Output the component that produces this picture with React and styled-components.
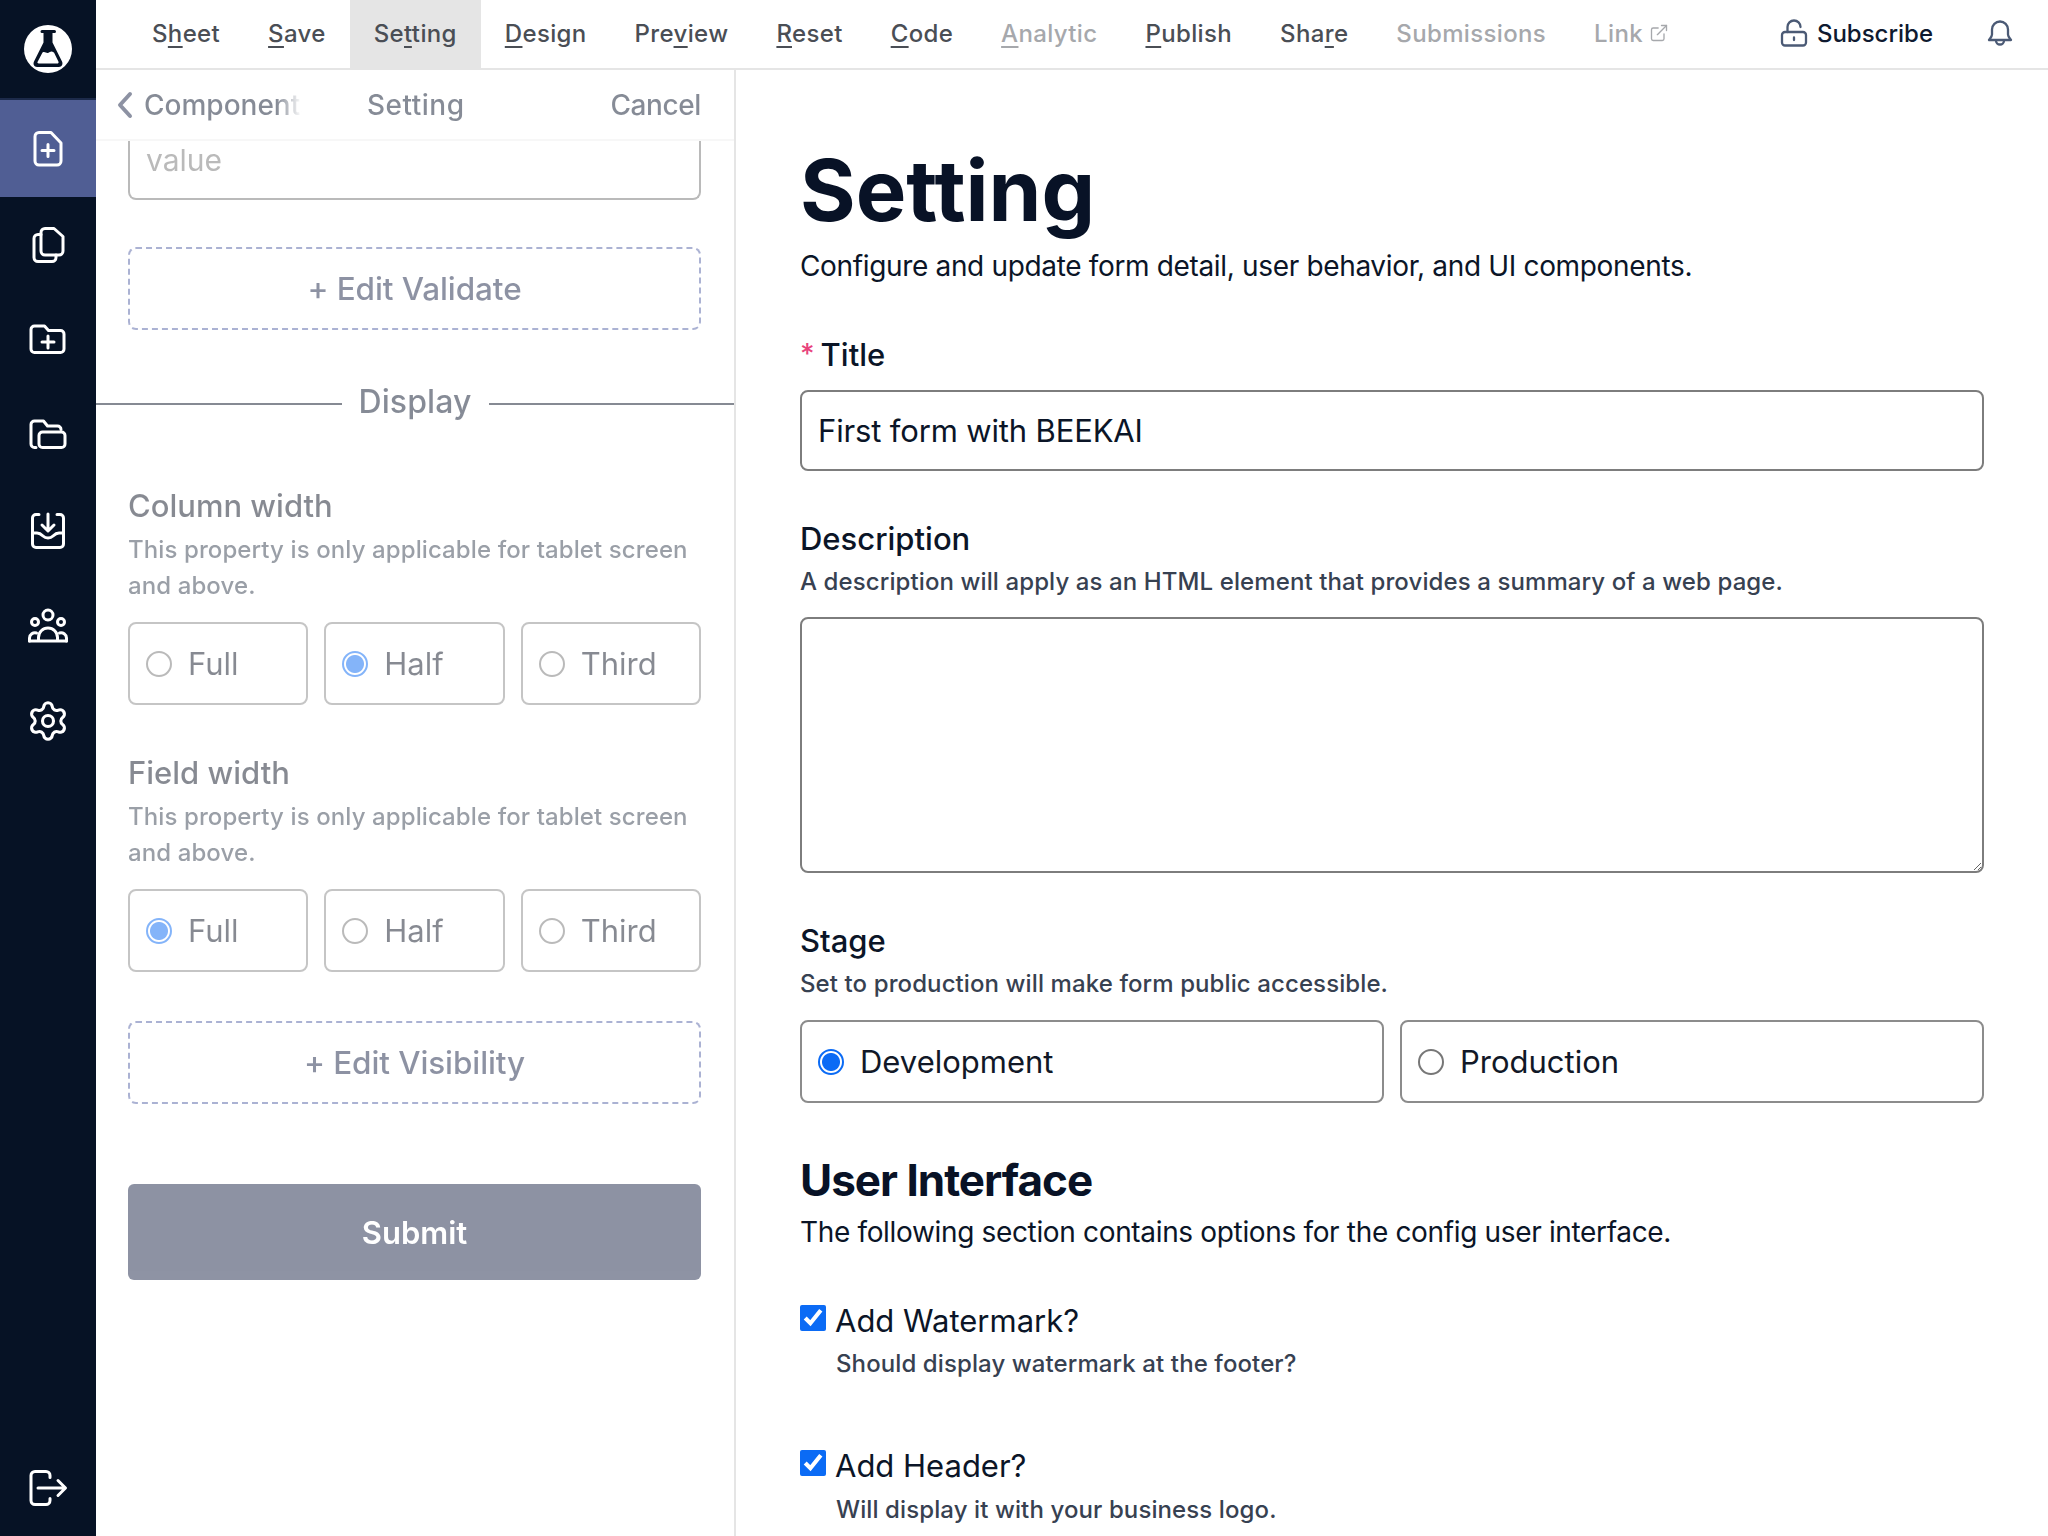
import styled, { createGlobalStyle } from "styled-components";
import { Settings, ExternalLink } from "lucide-react";

const GlobalStyle = createGlobalStyle`
    html, body {
        margin:0;
        padding:0;
        height:100%;
        overflow:hidden;
        background:#fff;
    }
    * {
        box-sizing:border-box;
    }
    body {
        font-family:Inter, "Liberation Sans", sans-serif;
        color:#0b1527;
    }
`

const Page = styled.div`
    display:flex;
    width:2048px;
    height:1536px;
    overflow:hidden;
`

const Sidebar = styled.aside`
    width:96px;
    flex:none;
    background:#061225;
    display:flex;
    flex-direction:column;
`

const LogoBox = styled.div`
    height:100px;
    display:flex;
    align-items:center;
    justify-content:center;
    border-bottom:2px solid #1c2a4a;
`

const SideItem = styled.div`
    height:${p => p.$tall ? 97 : 95.3}px;
    display:flex;
    align-items:center;
    justify-content:center;
    background:${p => p.$active ? "#505e94" : "transparent"};
    color:#fff;
`

const SideBottom = styled(SideItem)`
    margin-top:auto;
`

const Main = styled.div`
    flex:1;
    min-width:0;
    display:flex;
    flex-direction:column;
`

const TopBar = styled.nav`
    height:70px;
    flex:none;
    display:flex;
    align-items:stretch;
    padding-left:32px;
    border-bottom:2px solid #e5e5e5;
    font-size:24px;
    font-weight:500;
`

const NavItem = styled.div`
    display:flex;
    align-items:center;
    gap:6px;
    padding:0 24px 2px;
    letter-spacing:0.35px;
    color:${p => p.$off ? "#a6a8ac" : "#4a4e55"};
    background:${p => p.$active ? "#e5e5e5" : "transparent"};
    u {
        text-decoration-thickness:2px;
        text-underline-offset:4px;
    }
`

const TopRight = styled.div`
    margin-left:auto;
    display:flex;
    align-items:center;
    padding:0 34px 2px 0;
    color:#4b5a75;
`

const Subscribe = styled.div`
    display:flex;
    align-items:center;
    gap:9px;
    margin-right:53px;
    span {
        color:#0f1a30;
    }
`

const Body = styled.div`
    flex:1;
    min-height:0;
    display:flex;
`

const LeftPanel = styled.section`
    width:640px;
    flex:none;
    border-right:2px solid #e5e5e5;
    display:flex;
    flex-direction:column;
`

const LeftInner = styled.div`
    opacity:0.5;
    flex:1;
    display:flex;
    flex-direction:column;
`

const PanelHead = styled.div`
    height:69px;
    flex:none;
    display:grid;
    grid-template-columns:251px 1fr auto;
    align-items:center;
    padding:0 33px 0 20px;
    font-size:28px;
    font-weight:500;
    color:#0f1a30;
`

const PanelRule = styled.div`
    height:2px;
    flex:none;
    background:#f0f0f0;
`

const BackLink = styled.div`
    display:flex;
    align-items:center;
    gap:10px;
    color:#1d2749;
`

const BackText = styled.span`
    width:158px;
    overflow:hidden;
    white-space:nowrap;
    color:#0f1a30;
    -webkit-mask-image:linear-gradient(to right, #000 84%, transparent 100%);
    mask-image:linear-gradient(to right, #000 84%, transparent 100%);
`

const HeadTitle = styled.div`
    letter-spacing:0.5px;
`

const CancelText = styled.div`
    text-align:right;
    letter-spacing:-0.4px;
`

const PanelBody = styled.div`
    padding:0 33px 0 32px;
    display:flex;
    flex-direction:column;
`

const CutField = styled.input`
    height:59px;
    width:100%;
    border:2px solid #777;
    border-top:none;
    border-radius:0 0 8px 8px;
    padding:0 16px 20px;
    font:inherit;
    font-size:30px;
    outline:none;
    background:#fff;
    &::placeholder {
        color:#777;
    }
`

const DashedButton = styled.div`
    margin-top:${p => p.$top}px;
    height:83px;
    border:2px dashed #5a68a8;
    border-radius:8px;
    display:flex;
    align-items:center;
    justify-content:center;
    font-size:31.5px;
    font-weight:500;
    letter-spacing:-0.1px;
    color:#1d2749;
`

const Divider = styled.div`
    margin:52px -33px 0 -32px;
    height:44px;
    display:flex;
    align-items:center;
    gap:17px;
    font-size:32px;
    font-weight:500;
    letter-spacing:0.1px;
    color:#0f1a30;
    span {
        margin-bottom:6px;
    }
    &::before, &::after {
        content:"";
        flex:1;
        height:2px;
        background:#0f1729;
    }
`

const GroupLabel = styled.div`
    margin-top:${p => p.$top}px;
    font-size:31px;
    line-height:40px;
    font-weight:500;
    color:#111827;
`

const Help = styled.div`
    margin-top:${p => p.$top}px;
    margin-left:${p => p.$left || 0}px;
    font-size:24px;
    line-height:36px;
    font-weight:450;
    letter-spacing:0.1px;
    color:#374151;
`

const ChoiceRow = styled.div`
    margin-top:${p => p.$top}px;
    display:grid;
    grid-template-columns:${p => `repeat(${p.$cols}, 1fr)`};
    gap:16px;
`

const Choice = styled.label`
    height:83px;
    display:flex;
    align-items:center;
    gap:${p => p.$gap}px;
    padding-left:16px;
    border:2px solid #8c8c8c;
    border-radius:8px;
    font-size:31px;
    color:#111827;
`

const Radio = styled.input.attrs({ type: "radio" })`
    appearance:none;
    margin:0;
    flex:none;
    width:26px;
    height:26px;
    border-radius:50%;
    border:2px solid #777;
    background:#fff;
    &:checked {
        border-color:#0b6bf5;
        background:radial-gradient(circle, #0b6bf5 0 8.5px, #fff 9.5px);
    }
`

const SubmitButton = styled.div`
    margin-top:80px;
    height:96px;
    border-radius:6px;
    background:#1d2749;
    color:#fff;
    display:flex;
    align-items:center;
    justify-content:center;
    font-size:31px;
    font-weight:600;
`

const FormPanel = styled.section`
    flex:1;
    min-width:0;
    padding:71px 64px 0 64px;
    display:flex;
    flex-direction:column;
`

const BigTitle = styled.h1`
    margin:0;
    font-size:85px;
    line-height:100px;
    font-weight:700;
    color:#081226;
`

const Lead = styled.p`
    margin:${p => p.$top}px 0 0;
    font-size:28px;
    line-height:40px;
    letter-spacing:-0.34px;
    color:#0b1527;
`

const FieldLabel = styled.div`
    margin-top:${p => p.$top}px;
    font-size:31px;
    line-height:40px;
    font-weight:500;
    color:#0b1527;
`

const Star = styled.span`
    color:#e8437c;
    margin-right:6px;
    font-size:28px;
    vertical-align:2px;
`

const TextInput = styled.input`
    margin-top:15px;
    width:100%;
    height:81px;
    border:2px solid #7d7d7d;
    border-radius:8px;
    padding:0 16px;
    font:inherit;
    font-size:31px;
    letter-spacing:-0.15px;
    color:#0b1527;
    outline:none;
`

const TextArea = styled.textarea`
    display:block;
    margin-top:17px;
    width:100%;
    height:256px;
    border:2px solid #7d7d7d;
    border-radius:8px;
    padding:16px;
    font:inherit;
    outline:none;
`

const SectionTitle = styled.h2`
    margin:49px 0 0;
    font-size:44px;
    line-height:56px;
    font-weight:700;
    letter-spacing:-1px;
    color:#081226;
`

const CheckRow = styled.label`
    margin-top:${p => p.$top}px;
    display:flex;
    align-items:center;
    gap:9px;
    font-size:31px;
    line-height:40px;
    color:#0b1527;
`

const Check = styled.input.attrs({ type: "checkbox" })`
    margin:0 0 6px;
    width:26px;
    height:26px;
    flex:none;
    accent-color:#0b6bf5;
`

const Icon = ({ children, size = 40, box = 40, weight = 3 }) => (
    <svg width={size} height={size} viewBox={`0 0 ${box} ${box}`} fill="none" stroke="currentColor" strokeWidth={weight} strokeLinecap="round" strokeLinejoin="round">
        {children}
    </svg>
)

const Logo = () => (
    <svg width="48" height="48" viewBox="0 0 48 48">
        <circle cx="24" cy="24" r="24" fill="#fff"/>
        <path d="M18 5h12.500a1.500 1.500 0 0 1 0 3H28.500v9.500l9.500 19c1.300 2.700-.3 5.500-3 5.500H13c-2.700 0-4.300-2.800-3-5.500l9.500-19V8H18a1.500 1.500 0 0 1 0-3z" fill="#061225"/>
        <path d="M13.500 37l5-9.500c2.200-1.500 3.500.8 5.500.4 1.800-.4 3-2.200 4.800-.9l1.200.6 4.500 9.100c.4 1-.3 1.800-1.200 1.800H14.700c-.9 0-1.600-.8-1.200-1.500z" fill="#fff"/>
    </svg>
)

const NAV = [
    { pre: "S", key: "h", post: "eet" },
    { pre: "", key: "S", post: "ave" },
    { pre: "Se", key: "t", post: "ting", active: true },
    { pre: "", key: "D", post: "esign" },
    { pre: "Pre", key: "v", post: "iew" },
    { pre: "", key: "R", post: "eset" },
    { pre: "", key: "C", post: "ode" },
    { pre: "", key: "A", post: "nalytic", off: true },
    { pre: "", key: "P", post: "ublish" },
    { pre: "Sha", key: "r", post: "e" },
]

const WidthChoices = ({ name, selected }) => (
    <ChoiceRow $cols={3} $top={18}>
        {["Full", "Half", "Third"].map(opt => (
            <Choice key={opt} $gap={16}>
                <Radio name={name} defaultChecked={opt === selected}/>
                {opt}
            </Choice>
        ))}
    </ChoiceRow>
)

const App = () => {
    return (
        <Page>
            <GlobalStyle/>
            <Sidebar>
                <LogoBox><Logo/></LogoBox>
                <SideItem $active $tall>
                    <Icon>
                        <path d="M11 3.500h12l10 10.500v18a4 4 0 0 1-4 4H11a4 4 0 0 1-4-4V7.500a4 4 0 0 1 4-4z"/>
                        <path d="M20 15.500v12M14 21.500h12"/>
                    </Icon>
                </SideItem>
                <SideItem>
                    <Icon>
                        <path d="M17 3.500h9l9 8v14.500a4 4 0 0 1-4 4H17a4 4 0 0 1-4-4V7.500a4 4 0 0 1 4-4z"/>
                        <path d="M13 9.500h-3a4 4 0 0 0-4 4V32.500a4 4 0 0 0 4 4h14a4 4 0 0 0 4-4v-2.500"/>
                    </Icon>
                </SideItem>
                <SideItem>
                    <Icon>
                        <path d="M6.500 6h10l4 4.500h12a3.500 3.500 0 0 1 3.500 3.500v15a3.500 3.500 0 0 1-3.500 3.500h-26A3.500 3.500 0 0 1 3 29V9.500A3.500 3.500 0 0 1 6.500 6z"/>
                        <path d="M20 16v12M14 22h12"/>
                    </Icon>
                </SideItem>
                <SideItem>
                    <Icon>
                        <path d="M8 32.500h-1.500A3.500 3.500 0 0 1 3 29V9.500A3.500 3.500 0 0 1 6.500 6h9l4 5h10a3.500 3.500 0 0 1 3.500 3.500"/>
                        <path d="M14.500 17h19a3.500 3.500 0 0 1 3.500 3.500v8.500a3.500 3.500 0 0 1-3.500 3.500h-19A3.500 3.500 0 0 1 11 29v-8.500a3.500 3.500 0 0 1 3.500-3.500z"/>
                    </Icon>
                </SideItem>
                <SideItem>
                    <Icon>
                        <path d="M11 3.500H8a3.500 3.500 0 0 0-3.500 3.500v26A3.500 3.500 0 0 0 8 36.500h24a3.500 3.500 0 0 0 3.500-3.500V7A3.500 3.500 0 0 0 32 3.500h-3"/>
                        <path d="M5 22h4c3 0 4 1 6 3s3 2 5 2 3 0 5-2 3-3 6-3h4"/>
                        <path d="M20 3v16M14 14l6 6 6-6"/>
                    </Icon>
                </SideItem>
                <SideItem>
                    <Icon>
                        <circle cx="20" cy="9" r="5"/>
                        <circle cx="7" cy="16" r="3.500"/>
                        <circle cx="33" cy="16" r="3.500"/>
                        <path d="M1.500 35v-3a5.500 5.500 0 0 1 7-5M38.500 35v-3a5.500 5.500 0 0 0-7-5"/>
                        <path d="M1.500 35h37M10.500 35v-3.500a9.500 9.500 0 0 1 19 0V35"/>
                    </Icon>
                </SideItem>
                <SideItem>
                    <Settings size={44} strokeWidth={1.7}/>
                </SideItem>
                <SideBottom>
                    <Icon>
                        <path d="M22 9.500V7.500a4 4 0 0 0-4-4H7a4 4 0 0 0-4 4v25a4 4 0 0 0 4 4h11a4 4 0 0 0 4-4v-2"/>
                        <path d="M10 20h27M30 12.500l7.500 7.500-7.500 7.500"/>
                    </Icon>
                </SideBottom>
            </Sidebar>
            <Main>
                <TopBar>
                    {NAV.map(item => (
                        <NavItem key={item.pre + item.key + item.post} $active={item.active} $off={item.off}>
                            <span>{item.pre}<u>{item.key}</u>{item.post}</span>
                        </NavItem>
                    ))}
                    <NavItem $off>Submissions</NavItem>
                    <NavItem $off>Link <ExternalLink size={20} strokeWidth={1.6}/></NavItem>
                    <TopRight>
                        <Subscribe>
                            <Icon size={28} box={28} weight={2.3}>
                                <rect x="2" y="13" width="24" height="13.500" rx="3"/>
                                <path d="M7.500 13V8a6.500 6.500 0 0 1 13 0M14 18.500v2.500"/>
                            </Icon>
                            <span>Subscribe</span>
                        </Subscribe>
                        <Icon size={28} box={28} weight={2.3}>
                            <path d="M14 2.500a8 8 0 0 0-8 8v5c0 2-1.500 3.500-3 5.500h22c-1.500-2-3-3.500-3-5.500v-5a8 8 0 0 0-8-8z"/>
                            <path d="M10 21.500a4 4 0 0 0 8 0"/>
                        </Icon>
                    </TopRight>
                </TopBar>
                <Body>
                    <LeftPanel>
                        <LeftInner>
                            <PanelHead>
                                <BackLink>
                                    <svg width="18" height="28" viewBox="0 0 18 28" fill="none" stroke="currentColor" strokeWidth="4" strokeLinecap="round" strokeLinejoin="round">
                                        <path d="M14 3L4 14l10 11"/>
                                    </svg>
                                    <BackText>Components</BackText>
                                </BackLink>
                                <HeadTitle>Setting</HeadTitle>
                                <CancelText>Cancel</CancelText>
                            </PanelHead>
                            <PanelRule/>
                            <PanelBody>
                                <CutField placeholder="value"/>
                                <DashedButton $top={47}>+ Edit Validate</DashedButton>
                                <Divider><span>Display</span></Divider>
                                <GroupLabel $top={60}>Column width</GroupLabel>
                                <Help $top={6}>This property is only applicable for tablet screen and above.</Help>
                                <WidthChoices name="column" selected="Half"/>
                                <GroupLabel $top={48}>Field width</GroupLabel>
                                <Help $top={6}>This property is only applicable for tablet screen and above.</Help>
                                <WidthChoices name="field" selected="Full"/>
                                <DashedButton $top={49}>+ Edit Visibility</DashedButton>
                                <SubmitButton>Submit</SubmitButton>
                            </PanelBody>
                        </LeftInner>
                    </LeftPanel>
                    <FormPanel>
                        <BigTitle>Setting</BigTitle>
                        <Lead $top={5}>Configure and update form detail, user behavior, and UI components.</Lead>
                        <FieldLabel $top={48}><Star>*</Star>Title</FieldLabel>
                        <TextInput defaultValue="First form with BEEKAI"/>
                        <FieldLabel $top={48}>Description</FieldLabel>
                        <Help $top={5}>A description will apply as an HTML element that provides a summary of a web page.</Help>
                        <TextArea/>
                        <FieldLabel $top={48}>Stage</FieldLabel>
                        <Help $top={5}>Set to production will make form public accessible.</Help>
                        <ChoiceRow $cols={2} $top={18}>
                            <Choice $gap={16}>
                                <Radio name="stage" defaultChecked/>
                                Development
                            </Choice>
                            <Choice $gap={16}>
                                <Radio name="stage"/>
                                Production
                            </Choice>
                        </ChoiceRow>
                        <SectionTitle>User Interface</SectionTitle>
                        <Lead $top={4}>The following section contains options for the config user interface.</Lead>
                        <CheckRow $top={49}>
                            <Check defaultChecked/>
                            Add Watermark?
                        </CheckRow>
                        <Help $top={5} $left={36}>Should display watermark at the footer?</Help>
                        <CheckRow $top={64}>
                            <Check defaultChecked/>
                            Add Header?
                        </CheckRow>
                        <Help $top={6} $left={36}>Will display it with your business logo.</Help>
                    </FormPanel>
                </Body>
            </Main>
        </Page>
    )
}

export default App;
